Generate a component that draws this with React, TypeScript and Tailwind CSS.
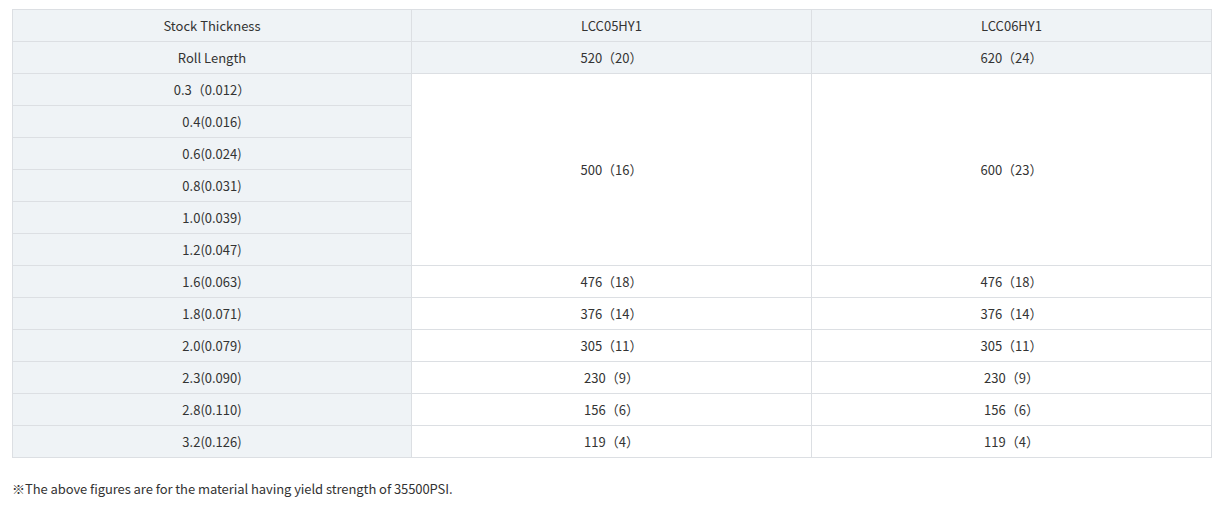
const thickness = [
  '0.3（0.012）',
  '0.4(0.016)',
  '0.6(0.024)',
  '0.8(0.031)',
  '1.0(0.039)',
  '1.2(0.047)',
  '1.6(0.063)',
  '1.8(0.071)',
  '2.0(0.079)',
  '2.3(0.090)',
  '2.8(0.110)',
  '3.2(0.126)',
]

const values: Record<number, [string, string]> = {
  6: ['476（18）', '476（18）'],
  7: ['376（14）', '376（14）'],
  8: ['305（11）', '305（11）'],
  9: ['230（9）', '230（9）'],
  10: ['156（6）', '156（6）'],
  11: ['119（4）', '119（4）'],
}

const head = 'h-[32px] border border-[#dcdfe3] bg-[#eff3f6] text-center align-middle p-0'
const cell = 'h-[32px] border border-[#dcdfe3] bg-white text-center align-middle p-0'

export default function App() {
  return (
    <div
      className="min-h-[524px] bg-white px-[12px] pt-[9px] text-[13px] text-[#333] leading-[20px]"
      style={{ fontFamily: '"Noto Sans CJK JP", "Noto Sans", sans-serif' }}
    >
      <table className="w-[1199px] table-fixed border-collapse">
        <colgroup>
          <col className="w-[399px]" />
          <col className="w-[400px]" />
          <col className="w-[400px]" />
        </colgroup>
        <tbody>
          <tr>
            <td className={head}>Stock Thickness</td>
            <td className={head}>LCC05HY1</td>
            <td className={head}>LCC06HY1</td>
          </tr>
          <tr>
            <td className={head}>Roll Length</td>
            <td className={head}>520（20）</td>
            <td className={head}>620（24）</td>
          </tr>
          {thickness.map((t, i) => (
            <tr key={t}>
              <td className={head}>{t}</td>
              {i === 0 && (
                <>
                  <td rowSpan={6} className={cell}>500（16）</td>
                  <td rowSpan={6} className={cell}>600（23）</td>
                </>
              )}
              {values[i] && (
                <>
                  <td className={cell}>{values[i][0]}</td>
                  <td className={cell}>{values[i][1]}</td>
                </>
              )}
            </tr>
          ))}
        </tbody>
      </table>
      <p className="mt-[21px] tracking-[-0.07px]">※The above figures are for the material having yield strength of 35500PSI.</p>
    </div>
  )
}
